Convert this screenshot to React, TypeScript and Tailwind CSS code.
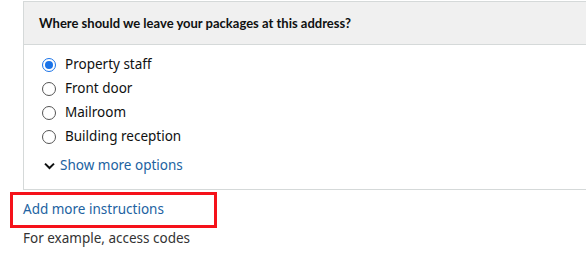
import React from "react";

const options = ["Property staff", "Front door", "Mailroom", "Building reception"];

function Radio({ checked }: { checked: boolean }) {
  return checked ? (
    <span className="w-[14px] h-[14px] rounded-full border-[1.5px] border-[#1a73e8] flex items-center justify-center shrink-0">
      <span className="w-[8px] h-[8px] rounded-full bg-[#1a73e8]" />
    </span>
  ) : (
    <span className="w-[14px] h-[14px] rounded-full border border-[#555] bg-white shrink-0" />
  );
}

export default function App() {
  return (
    <div className="w-[586px] h-[273px] bg-white overflow-hidden text-[#0f1111]" style={{ fontFamily: '"Noto Sans", "Liberation Sans", sans-serif' }}>
      <div className="pt-px pl-[23px]">
        <div className="border-l border-t border-b border-[#d5d9d9] w-[600px]">
          <div className="h-[43px] bg-[#f0f0f0] border-b border-[#d5d9d9] flex items-center pl-[15px]">
            <span className="text-[13px] font-bold leading-none" style={{ fontFamily: 'Lato, "Noto Sans", sans-serif' }}>Where should we leave your packages at this address?</span>
          </div>
          <div className="pl-[18px] pt-[8px] pb-[10px]">
            {options.map((o, i) => (
              <div key={o} className="flex items-center h-[24px] gap-[9px]">
                <Radio checked={i === 0} />
                <span className="text-[13.5px] leading-none">{o}</span>
              </div>
            ))}
            <div className="flex items-center h-[30px] pt-[3px] gap-[5px] pl-[2px]">
              <svg width="11" height="8" viewBox="0 0 11 8" className="shrink-0">
                <path d="M1 1.6 L5.5 6 L10 1.6" fill="none" stroke="#0f1111" strokeWidth="2" />
              </svg>
              <span className="text-[13.5px] leading-none text-[#2162a1]">Show more options</span>
            </div>
          </div>
        </div>
      </div>
      <div className="pl-[10px] pt-[2px]">
        <div className="w-[207px] h-[36px] border-[3px] border-[#f5121a] flex items-center pl-[10px]">
          <span className="text-[13.5px] leading-none text-[#2162a1]">Add more instructions</span>
        </div>
        <div className="pl-[13px] pt-[1px] text-[13.5px] leading-[18px] text-[#333]">For example, access codes</div>
      </div>
    </div>
  );
}
